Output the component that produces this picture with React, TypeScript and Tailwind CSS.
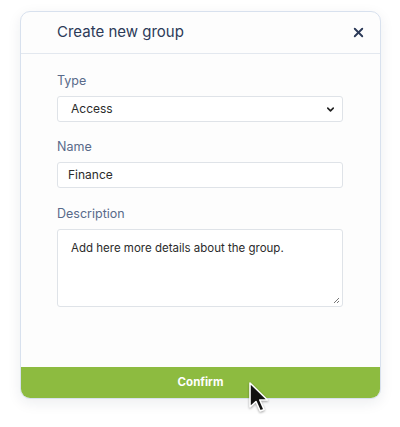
import { X, ChevronDown } from "lucide-react";

const font = { fontFamily: "Inter, 'Open Sans', sans-serif" };

const Label = ({ children }: { children: React.ReactNode }) => (
  <label className="block text-[12.5px] leading-4 text-[#596a8a] mb-[7px]">{children}</label>
);

const Cursor = () => (
  <svg
    width="22"
    height="34"
    viewBox="0 0 22 34"
    className="absolute left-[247px] top-[381px] drop-shadow-[0_1px_1px_rgba(0,0,0,0.35)]"
  >
    <path
      d="M3 2 L3 26 L9 20.5 L13.2 30 L17 28.4 L12.8 19 L20.5 19 Z"
      fill="#111"
      stroke="#fff"
      strokeWidth="1.6"
      strokeLinejoin="round"
    />
  </svg>
);

export default function App() {
  return (
    <div className="relative w-[400px] h-[427px] bg-white pt-[11px] pl-[20px]" style={font}>
      <div className="w-[361px] rounded-[10px] border border-[#d8e1ee] bg-[#fdfdfd] shadow-[0_4px_14px_rgba(30,40,70,0.08)] overflow-hidden">
        <div className="flex items-center justify-between h-[42px] pl-[36px] pr-[14px] border-b border-[#e3e8ef]">
          <h2 className="text-[15px] font-normal text-[#2c3a58]">Create new group</h2>
          <X size={15} strokeWidth={3} className="text-[#2c3a58]" />
        </div>

        <div className="pl-[36px] pr-[37px] pt-[19px] pb-[60px]">
          <Label>Type</Label>
          <div className="flex items-center justify-between h-[26px] border border-[#dfe3e8] rounded-[3px] bg-white pl-[13px] pr-[6px]">
            <span className="text-[12px] text-[#2b2b2b]">Access</span>
            <ChevronDown size={11} strokeWidth={3.5} className="text-[#222]" />
          </div>

          <div className="mt-[17px]">
            <Label>Name</Label>
            <div className="flex items-center h-[26px] border border-[#dfe3e8] rounded-[3px] bg-white pl-[10px]">
              <span className="text-[12px] text-[#2b2b2b]">Finance</span>
            </div>
          </div>

          <div className="mt-[18px]">
            <Label>Description</Label>
            <div className="relative h-[78px] border border-[#dfe3e8] rounded-[3px] bg-white pl-[13px] pt-[11px]">
              <span className="block text-[11.5px] leading-[14px] text-[#2b2b2b]">
                Add here more details about the group.
              </span>
              <svg width="7" height="7" viewBox="0 0 7 7" className="absolute right-[2px] bottom-[2px]">
                <path d="M1 6 L6 1 M4 6 L6 4" stroke="#777" strokeWidth="1" />
              </svg>
            </div>
          </div>
        </div>

        <button className="w-full h-[31px] bg-[#8dbb40] text-white text-[11.5px] font-bold flex items-center justify-center">
          Confirm
        </button>
      </div>
      <Cursor />
    </div>
  );
}
